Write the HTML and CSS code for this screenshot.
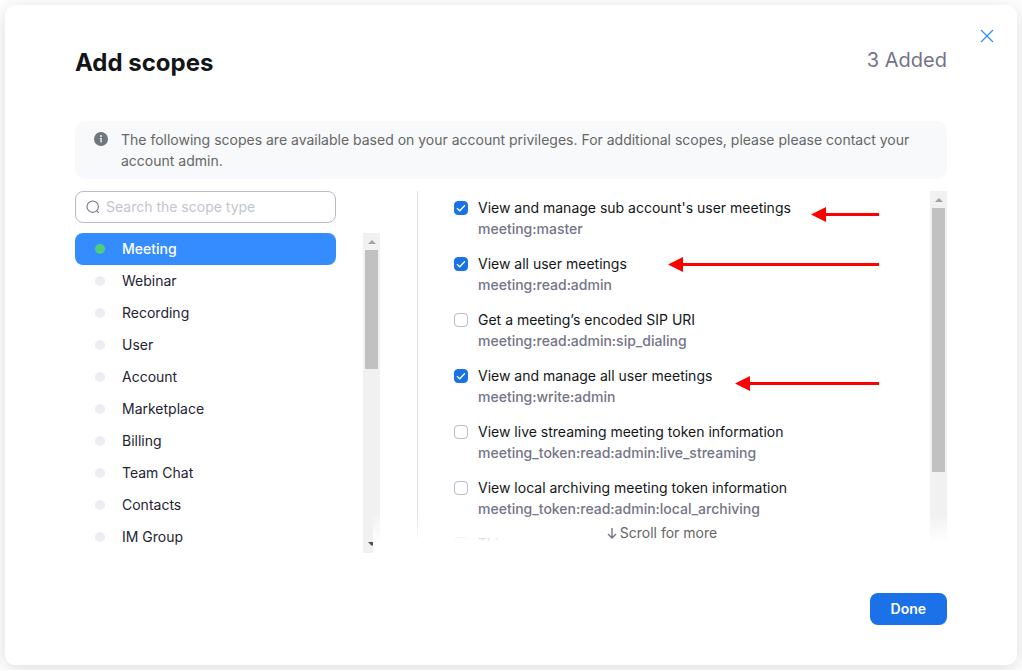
FILE: index.html
```html
<!DOCTYPE html>
<html lang="en">

<head>
    <meta charset="utf-8">
    <title>Add scopes</title>
    <link rel="stylesheet" href="styles.css">
</head>

<body>
    <div class="dialog" role="dialog" aria-labelledby="dialog-title">
        <button class="close" aria-label="Close">
            <svg width="14" height="14" viewBox="0 0 14 14">
                <path d="M1 1L13 13M13 1L1 13" stroke="#2d8cff" stroke-width="1.2" fill="none" />
            </svg>
        </button>

        <header class="header">
            <h1 id="dialog-title">Add scopes</h1>
            <span class="added">3 Added</span>
        </header>

        <div class="notice">
            <svg class="notice-icon" width="14" height="14" viewBox="0 0 14 14">
                <circle cx="7" cy="7" r="7" fill="#6e7680" />
                <circle cx="7" cy="3.9" r="1" fill="#f7f9fa" />
                <path d="M5.8 6H7.7V10.5H6.4V6.8H5.8Z" fill="#f7f9fa" />
            </svg>
            <p>The following scopes are available based on your account privileges. For additional scopes, please please contact your account admin.</p>
        </div>

        <div class="columns">
            <div class="types">
                <div class="search">
                    <svg width="14" height="14" viewBox="0 0 14 14">
                        <circle cx="6.7" cy="6.7" r="5.7" fill="none" stroke="#747487" stroke-width="1.1" />
                        <path d="M10.8 10.8L12.8 12.8" stroke="#747487" stroke-width="1.1" />
                    </svg>
                    <input type="text" placeholder="Search the scope type" aria-label="Search the scope type">
                </div>
                <div class="type-box">
                    <nav class="type-list">
                        <a class="type active" href="#">Meeting</a>
                        <a class="type" href="#">Webinar</a>
                        <a class="type" href="#">Recording</a>
                        <a class="type" href="#">User</a>
                        <a class="type" href="#">Account</a>
                        <a class="type" href="#">Marketplace</a>
                        <a class="type" href="#">Billing</a>
                        <a class="type" href="#">Team Chat</a>
                        <a class="type" href="#">Contacts</a>
                        <a class="type" href="#">IM Group</a>
                    </nav>
                    <div class="scrollbar">
                        <span class="arrow-up"></span>
                        <span class="thumb thumb-types"></span>
                        <span class="arrow-down"></span>
                    </div>
                </div>
            </div>

            <div class="scopes">
                <div class="scope-list">
                    <div class="scope">
                        <input type="checkbox" id="scope1" checked>
                        <label for="scope1">View and manage sub account's user meetings <span class="key">meeting:master</span></label>
                    </div>
                    <div class="scope">
                        <input type="checkbox" id="scope2" checked>
                        <label for="scope2">View all user meetings <span class="key">meeting:read:admin</span></label>
                    </div>
                    <div class="scope">
                        <input type="checkbox" id="scope3">
                        <label for="scope3">Get a meeting’s encoded SIP URI <span class="key">meeting:read:admin:sip_dialing</span></label>
                    </div>
                    <div class="scope">
                        <input type="checkbox" id="scope4" checked>
                        <label for="scope4">View and manage all user meetings <span class="key">meeting:write:admin</span></label>
                    </div>
                    <div class="scope">
                        <input type="checkbox" id="scope5">
                        <label for="scope5">View live streaming meeting token information <span class="key">meeting_token:read:admin:live_streaming</span></label>
                    </div>
                    <div class="scope">
                        <input type="checkbox" id="scope6">
                        <label for="scope6">View local archiving meeting token information <span class="key">meeting_token:read:admin:local_archiving</span></label>
                    </div>
                    <div class="scope">
                        <input type="checkbox" id="scope7">
                        <label for="scope7">This</label>
                    </div>
                </div>
                <div class="scrollbar">
                    <span class="arrow-up"></span>
                    <span class="thumb thumb-scopes"></span>
                </div>

                <!-- red pointers to the ticked scopes -->
                <svg class="pointers" width="211" height="184" viewBox="0 0 211 184">
                    <g fill="#ff0000">
                        <path d="M143 7.5L158 0V6H211V9H158V15Z" />
                        <path d="M0 57.5L15 50V56H211V59H15V65Z" />
                        <path d="M67 176.5L82 169V175H211V178H82V184Z" />
                    </g>
                </svg>
            </div>

            <div class="more">
                <svg width="10" height="12" viewBox="0 0 10 12">
                    <path d="M5 1V11M1 7L5 11L9 7" fill="none" stroke="#747487" stroke-width="1.4" />
                </svg>
                <span>Scroll for more</span>
            </div>
        </div>

        <footer class="footer">
            <button class="done">Done</button>
        </footer>
    </div>
</body>

</html>
```
FILE: styles.css
```css
* {
    box-sizing: border-box;
}

body {
    margin: 0;
    padding: 5px;
    background-color: #fff;
    font-family: Inter, "Open Sans", sans-serif;
    font-size: 14px;
    line-height: 21px;
    color: #131619;
}

.dialog {
    position: relative;
    padding: 40px 70px;
    background-color: #fff;
    border-radius: 10px;
    box-shadow: 0 4px 20px rgba(0, 0, 0, 0.14);
}

.close {
    position: absolute;
    top: 24px;
    right: 23px;
    display: flex;
    padding: 0;
    border: none;
    background: none;
}

.header {
    display: flex;
    justify-content: space-between;
    align-items: flex-start;
    margin-bottom: 40px;
}

h1 {
    margin: 0;
    font-size: 24px;
    line-height: 36px;
    font-weight: 700;
}

.added {
    font-size: 20px;
    line-height: 30px;
    color: #747487;
}

.notice {
    display: flex;
    gap: 13px;
    padding: 8px 32px 8px 19px;
    margin-bottom: 12px;
    border-radius: 10px;
    background-color: #f7f9fa;
    color: #666;
}

.notice-icon {
    flex: none;
    margin-top: 3px;
}

.notice p {
    margin: 0;
}

.columns {
    position: relative;
    display: flex;
    align-items: flex-start;
    gap: 37px;
}

.types {
    width: 305px;
}

.search {
    display: flex;
    align-items: center;
    gap: 6px;
    width: 261px;
    height: 32px;
    padding: 0 10px 1px;
    margin-bottom: 10px;
    border: 1px solid #babacc;
    border-radius: 8px;
}

.search input {
    flex: 1;
    min-width: 0;
    padding: 0;
    border: none;
    outline: none;
    background: none;
    font: inherit;
}

.search input::placeholder {
    color: #c1c6ce;
}

.type-box {
    display: flex;
    justify-content: space-between;
}

.type-list {
    width: 261px;
}

.type {
    display: flex;
    align-items: center;
    gap: 17px;
    height: 32px;
    padding: 0 0 2px 20px;
    border-radius: 8px;
    color: #232333;
    text-decoration: none;
}

.type::before {
    content: "";
    width: 10px;
    height: 10px;
    margin-top: 2px;
    border-radius: 50%;
    background-color: #ededf4;
}

.type.active {
    background-color: #348cff;
    color: #fff;
    font-weight: 500;
}

.type.active::before {
    background-color: #50cc7f;
}

.scrollbar {
    display: flex;
    flex-direction: column;
    align-items: center;
    width: 17px;
    background-color: #f1f1f1;
}

.arrow-up {
    margin: 7px 0 6px;
    border: 4px solid transparent;
    border-top: none;
    border-bottom-color: #a3a3a3;
}

.arrow-down {
    margin: auto 0 7px;
    border: 4px solid transparent;
    border-bottom: none;
    border-top-color: #505050;
}

.thumb {
    width: 13px;
    background-color: #c1c1c1;
}

.thumb-types {
    height: 119px;
}

.thumb-scopes {
    height: 264px;
}

.scopes {
    position: relative;
    flex: 1;
    display: flex;
    justify-content: space-between;
    height: 350px;
    overflow: hidden;
    border-left: 1px solid #dfdfeb;
}

.scope-list {
    display: flex;
    flex-direction: column;
    gap: 14px;
    padding: 6px 0 0 36px;
}

.scope {
    display: flex;
    gap: 10px;
}

.scope input {
    appearance: none;
    flex: none;
    width: 14px;
    height: 14px;
    margin: 4px 0 0;
    border: 1px solid #babacc;
    border-radius: 4px;
}

.scope input:checked {
    border-color: #1a71e8;
    background: #1a71e8 url("data:image/svg+xml,%3Csvg xmlns='http://www.w3.org/2000/svg' viewBox='0 0 12 12'%3E%3Cpath d='M2 6.2L4.7 8.8L10 3.2' fill='none' stroke='white' stroke-width='1.3'/%3E%3C/svg%3E");
}

.key {
    display: block;
    color: #747487;
    font-weight: 500;
}

.pointers {
    position: absolute;
    top: 16px;
    right: 68px;
}

/* fades out the bottom of the lists */
.more {
    position: absolute;
    left: 298px;
    right: 0;
    bottom: 0;
    height: 40px;
    padding: 9px 0 0 4px;
    display: flex;
    justify-content: center;
    align-items: flex-start;
    gap: 3px;
    background-image: linear-gradient(rgba(255, 255, 255, 0), #fff 30px);
    color: #666;
}

.more svg {
    margin-top: 5px;
}

.footer {
    display: flex;
    justify-content: flex-end;
    margin-top: 40px;
}

.done {
    height: 32px;
    padding: 0 21px 2px;
    border: none;
    border-radius: 8px;
    background-color: #1a71e8;
    color: #fff;
    font: inherit;
    font-weight: 600;
}
```
